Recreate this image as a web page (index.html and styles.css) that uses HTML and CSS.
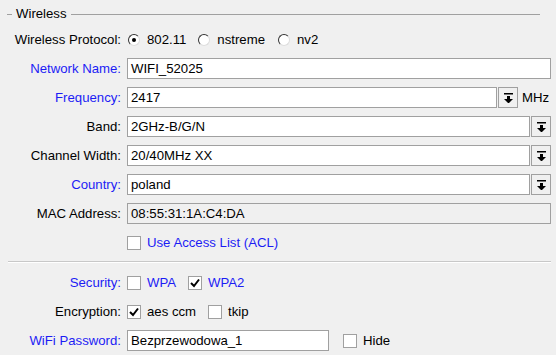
FILE: index.html
```html
<!DOCTYPE html>
<html>
<head>
<meta charset="utf-8">
<link rel="stylesheet" href="styles.css">
</head>
<body>
<div class="panel">
  <div class="legend"><span class="lline-s"></span><span class="ltext">Wireless</span><span class="lline"></span></div>

  <div class="row">
    <div class="label">Wireless Protocol:</div>
    <div class="field opts">
      <span class="opt"><span class="radio on"></span>802.11</span>
      <span class="opt"><span class="radio"></span>nstreme</span>
      <span class="opt"><span class="radio"></span>nv2</span>
    </div>
  </div>

  <div class="row">
    <div class="label blue">Network Name:</div>
    <div class="field"><div class="input full">WIFI_52025</div></div>
  </div>

  <div class="row">
    <div class="label blue">Frequency:</div>
    <div class="field">
      <div class="input freq">2417</div>
      <div class="btn"><svg width="9" height="10" viewBox="0 0 9 10"><rect x="0" y="0" width="9" height="1.5" fill="#000"/><rect x="3" y="3" width="3" height="3" fill="#000"/><polygon points="0,6 9,6 4.5,10.5" fill="#000"/></svg></div>
      <span class="unit">MHz</span>
    </div>
  </div>

  <div class="row">
    <div class="label">Band:</div>
    <div class="field">
      <div class="input sel">2GHz-B/G/N</div>
      <div class="btn"><svg width="9" height="10" viewBox="0 0 9 10"><rect x="0" y="0" width="9" height="1.5" fill="#000"/><rect x="3" y="3" width="3" height="3" fill="#000"/><polygon points="0,6 9,6 4.5,10.5" fill="#000"/></svg></div>
    </div>
  </div>

  <div class="row">
    <div class="label">Channel Width:</div>
    <div class="field">
      <div class="input sel">20/40MHz XX</div>
      <div class="btn"><svg width="9" height="10" viewBox="0 0 9 10"><rect x="0" y="0" width="9" height="1.5" fill="#000"/><rect x="3" y="3" width="3" height="3" fill="#000"/><polygon points="0,6 9,6 4.5,10.5" fill="#000"/></svg></div>
    </div>
  </div>

  <div class="row">
    <div class="label blue">Country:</div>
    <div class="field">
      <div class="input sel">poland</div>
      <div class="btn"><svg width="9" height="10" viewBox="0 0 9 10"><rect x="0" y="0" width="9" height="1.5" fill="#000"/><rect x="3" y="3" width="3" height="3" fill="#000"/><polygon points="0,6 9,6 4.5,10.5" fill="#000"/></svg></div>
    </div>
  </div>

  <div class="row">
    <div class="label">MAC Address:</div>
    <div class="field"><div class="input full ro">08:55:31:1A:C4:DA</div></div>
  </div>

  <div class="row">
    <div class="label"></div>
    <div class="field opts">
      <span class="opt blue"><span class="check"></span>Use Access List (ACL)</span>
    </div>
  </div>

  <div class="sep"></div>

  <div class="row">
    <div class="label blue">Security:</div>
    <div class="field opts">
      <span class="opt blue"><span class="check"></span>WPA</span>
      <span class="opt blue"><span class="check on"><svg width="12" height="12" viewBox="0 0 12 12"><polyline points="2,6 5,9 10,2.5" fill="none" stroke="#000" stroke-width="2"/></svg></span>WPA2</span>
    </div>
  </div>

  <div class="row">
    <div class="label">Encryption:</div>
    <div class="field opts">
      <span class="opt"><span class="check on"><svg width="12" height="12" viewBox="0 0 12 12"><polyline points="2,6 5,9 10,2.5" fill="none" stroke="#000" stroke-width="2"/></svg></span>aes ccm</span>
      <span class="opt"><span class="check"></span>tkip</span>
    </div>
  </div>

  <div class="row">
    <div class="label blue">WiFi Password:</div>
    <div class="field">
      <div class="input pw">Bezprzewodowa_1</div>
      <span class="opt hide"><span class="check"></span>Hide</span>
    </div>
  </div>
</div>
</body>
</html>
```

FILE: styles.css
```css
html, body {
  margin: 0;
  padding: 0;
  background: #f0f0f0;
}
body {
  font-family: "Liberation Sans", Arial, sans-serif;
  font-size: 13.2px;
  color: #000;
  width: 556px;
  height: 355px;
  overflow: hidden;
}
.panel {
  padding-top: 4px;
}
.legend {
  display: flex;
  align-items: center;
  height: 20px;
  margin-bottom: 5px;
}
.lline-s {
  margin-left: 7px;
  width: 5px;
  height: 1px;
  background: #a0a0a0;
}
.ltext {
  padding: 0 4px;
  line-height: 20px;
}
.lline {
  width: 469px;
  height: 1px;
  background: #a0a0a0;
}
.row {
  display: flex;
  align-items: center;
  height: 21px;
  margin-bottom: 8px;
}
.label {
  width: 121px;
  text-align: right;
  white-space: nowrap;
  flex: none;
}
.blue {
  color: #1c1cf5;
}
.field {
  margin-left: 6px;
  display: flex;
  align-items: center;
  height: 21px;
}
.input {
  box-sizing: border-box;
  height: 21px;
  border: 1px solid #a0a0a0;
  background: #fff;
  padding-left: 3px;
  line-height: 19px;
  white-space: nowrap;
}
.input.full { width: 424px; }
.input.ro { background: #f0f0f0; }
.input.freq { width: 370px; }
.input.sel { width: 403px; }
.input.pw { width: 202px; }
.btn {
  box-sizing: border-box;
  width: 20px;
  height: 21px;
  margin-left: 1px;
  border: 1px solid #a0a0a0;
  background: #f0f0f0;
  display: flex;
  align-items: center;
  justify-content: center;
}
.unit {
  margin-left: 4px;
}
.opts {
  display: flex;
}
.opt {
  display: flex;
  align-items: center;
  white-space: nowrap;
  margin-right: 12px;
}
.radio {
  box-sizing: border-box;
  width: 12px;
  height: 12px;
  border-radius: 50%;
  border: 1px solid #333;
  border-right-color: #ddd;
  border-bottom-color: #ddd;
  background: #fff;
  margin-left: 1px;
  margin-right: 7px;
  position: relative;
}
.opts .opt:nth-child(2) .radio { margin-left: 0; }
.radio.on::after {
  content: "";
  position: absolute;
  left: 3px;
  top: 3px;
  width: 4px;
  height: 4px;
  border-radius: 50%;
  background: #000;
}
.check {
  box-sizing: border-box;
  width: 14px;
  height: 14px;
  border: 1px solid #a0a0a0;
  background: #fff;
  margin-right: 6px;
  display: flex;
  align-items: center;
  justify-content: center;
}
.sep {
  margin: 2px 5px 9px 8px;
  height: 1px;
  background: #c8c8c8;
  border-bottom: 1px solid #fff;
}
.hide {
  margin-left: 14px;
}
```
